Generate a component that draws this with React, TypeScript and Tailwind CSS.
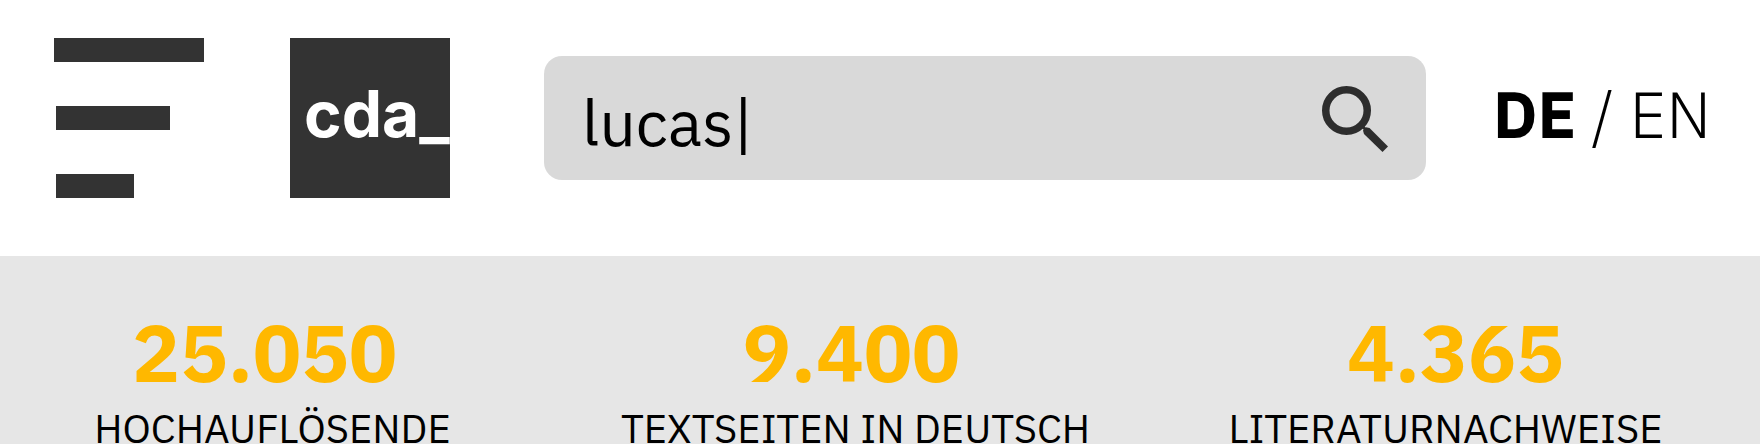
function MenuIcon() {
  return (
    <svg viewBox="0 0 150 160" className="h-40 w-[150px]" fill="currentColor" aria-hidden="true">
      <rect x="0" y="0" width="150" height="24" />
      <rect x="2" y="68" width="114" height="24" />
      <rect x="2" y="136" width="78" height="24" />
    </svg>
  );
}

function SearchIcon() {
  return (
    <svg viewBox="0 0 66 66" className="size-[66px]" aria-hidden="true">
      <circle cx="24.5" cy="24.5" r="20.75" fill="none" stroke="#2d2d2d" strokeWidth="7.5" />
      <path d="M41 44.5 L44 41.2 L47.5 42 L66 60.5 L60.5 66 L42 48 Z" fill="#2d2d2d" />
      <path d="M39 39 L44 44" stroke="#2d2d2d" strokeWidth="3" />
    </svg>
  );
}

const stats = [
  { value: "25.050", label: "HOCHAUFLÖSENDE", shift: "pr-4" },
  { value: "9.400", label: "TEXTSEITEN IN DEUTSCH", shift: "pr-2" },
  { value: "4.365", label: "LITERATURNACHWEISE", shift: "pl-5" },
];

export default function App() {
  return (
    <div className="flex min-h-screen flex-col bg-white font-['IBM_Plex_Sans','Noto_Sans',sans-serif] text-black">
      <header className="flex shrink-0 items-center pt-[38px] pr-[49px] pb-[58px] pl-[54px]">
        <button type="button" aria-label="Menü" className="mr-[86px] shrink-0 text-[#333333]">
          <MenuIcon />
        </button>
        <a
          href="#"
          className="mr-[94px] flex size-40 shrink-0 overflow-hidden bg-[#333333] pt-9 pl-[14px] font-['Inter',sans-serif] text-[64px] leading-[80px] font-bold text-white"
        >
          cda_
        </a>
        <form role="search" className="mr-[67px] flex h-[124px] min-w-0 flex-1 items-center rounded-[18px] bg-[#d9d9d9] pt-px pr-[38px] pl-[38px]">
          <input
            type="text"
            aria-label="Suche"
            defaultValue="lucas|"
            className="h-full min-w-0 flex-1 bg-transparent pt-1.5 text-[64px] outline-none"
          />
          <button type="button" aria-label="Suchen" className="shrink-0">
            <SearchIcon />
          </button>
        </form>
        <nav aria-label="Sprache" className="shrink-0 pb-2 text-[64px] leading-[84px] font-light whitespace-pre">
          <a href="#de" className="font-bold">DE</a> / <a href="#en">EN</a>
        </nav>
      </header>
      <main className="grid flex-1 grid-cols-[545fr_621fr_559fr] content-start bg-[#e6e6e6] pt-[50px] pr-[35px] text-center">
        {stats.map((s) => (
          <div key={s.label}>
            <p className={`text-[80px] leading-[92px] font-bold text-[#ffb800] ${s.shift}`}>{s.value}</p>
            <p className="mt-4 text-[40px] leading-7 whitespace-nowrap">{s.label}</p>
          </div>
        ))}
      </main>
    </div>
  );
}
